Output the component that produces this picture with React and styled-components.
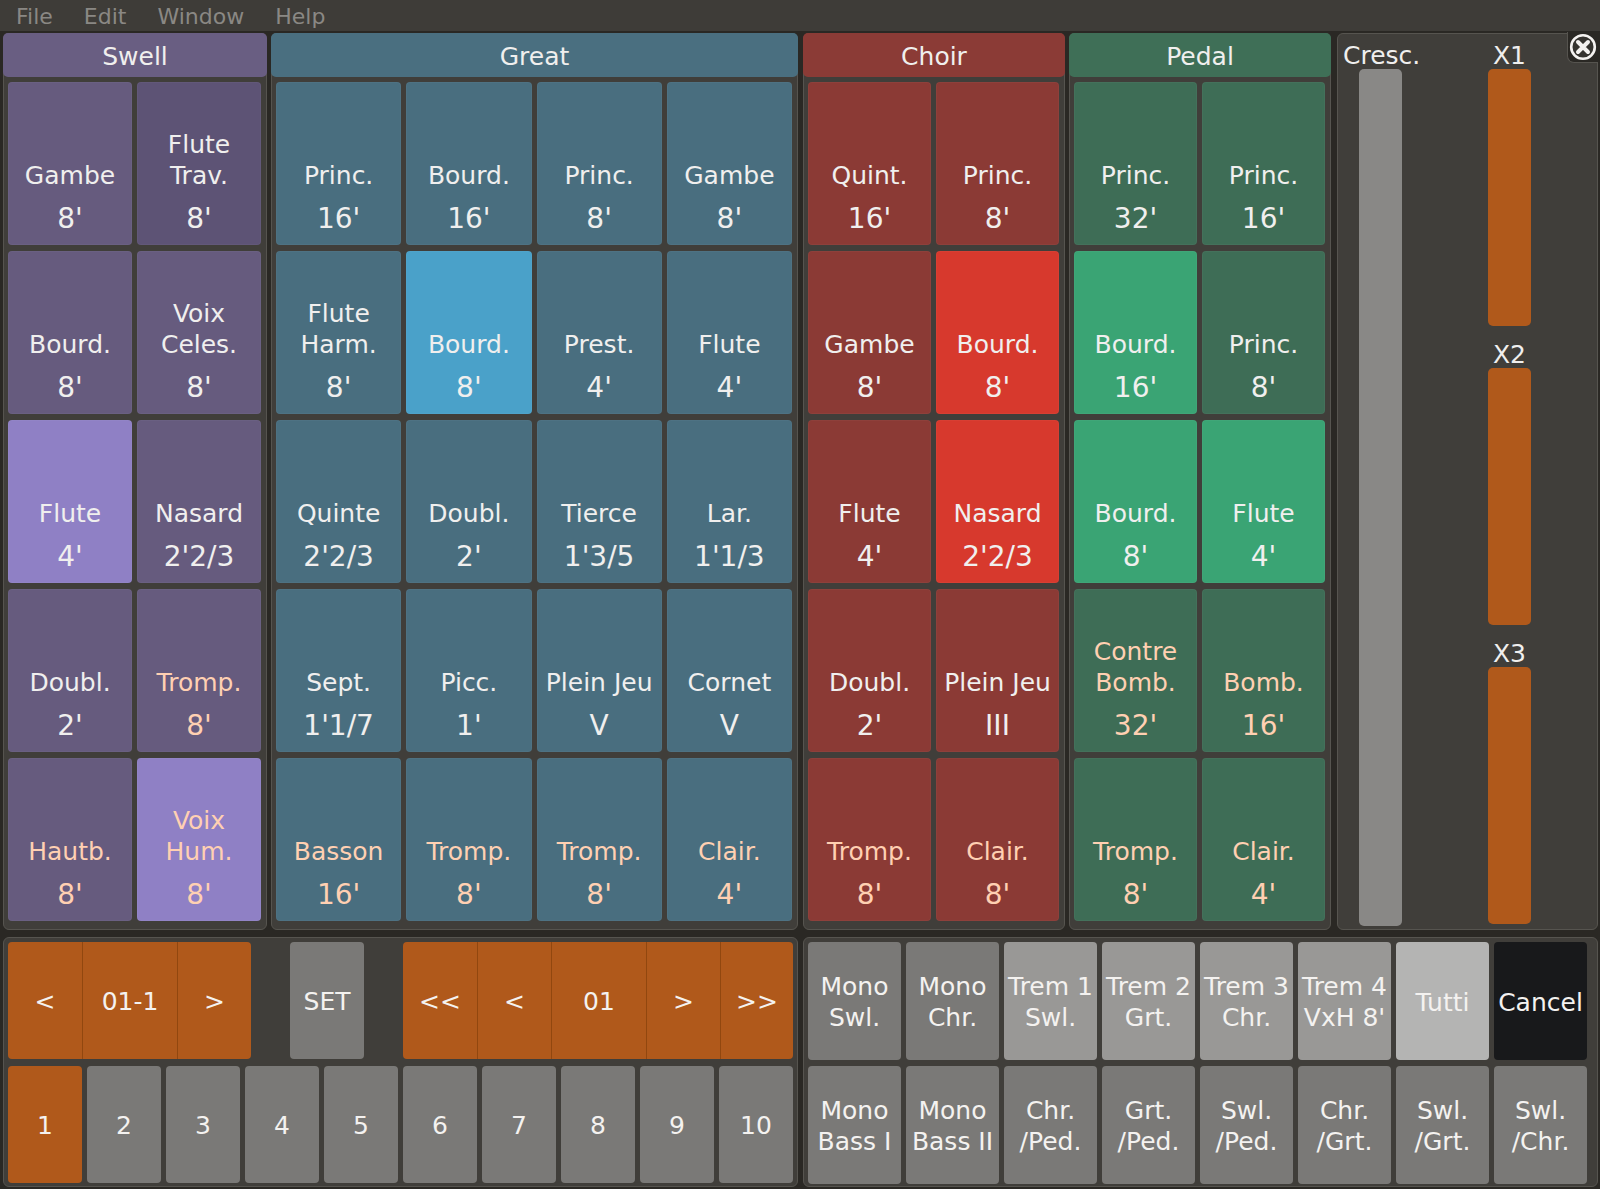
import React from "react";
import styled, { createGlobalStyle } from "styled-components";

const Global = createGlobalStyle`
  html, body { margin: 0; padding: 0; background: #2a2824; }
  body { font-family: "DejaVu Sans", "Liberation Sans", sans-serif; }
  * { box-sizing: border-box; }
`;

const Page = styled.div`
  width: 1600px;
  height: 1189px;
  background: #2a2824;
  display: flex;
  flex-direction: column;
  color: #f0efee;
  overflow: hidden;
`;

const MenuBar = styled.div`
  height: 31px;
  background: #3e3c38;
  display: flex;
  align-items: center;
  gap: 31px;
  padding-left: 16px;
  padding-top: 3px;
  font-size: 22px;
  color: #8a8884;
  flex: 0 0 auto;
`;

const MenuItem = styled.span`
  line-height: 28px;
`;

const TopRow = styled.div`
  margin-top: 2px;
  height: 897px;
  display: flex;
  padding-left: 3px;
  flex: 0 0 auto;
`;

const Panel = styled.div`
  width: ${(p) => p.$w}px;
  margin-right: ${(p) => p.$mr || 0}px;
  background: #403e3a;
  border: 1px solid #56544f;
  border-radius: 6px;
  display: flex;
  flex-direction: column;
  position: relative;
  flex: 0 0 auto;
`;

const Header = styled.div`
  height: 44px;
  margin: -1px -1px 0;
  padding-top: 2px;
  background: ${(p) => p.$bg};
  border-radius: 5px;
  display: flex;
  align-items: center;
  justify-content: center;
  font-size: 25px;
  color: #f0efee;
  flex: 0 0 auto;
`;

const StopGrid = styled.div`
  flex: 1;
  display: grid;
  grid-template-columns: repeat(${(p) => p.$cols}, 1fr);
  grid-template-rows: repeat(5, 1fr);
  column-gap: 5px;
  row-gap: 6px;
  padding: 5px 5px 8px 4px;
`;

const Stop = styled.div`
  background: ${(p) => p.$bg};
  border-radius: 4px;
  border: 1px solid rgba(255, 255, 255, 0.03);
  display: flex;
  flex-direction: column;
  justify-content: flex-end;
  align-items: center;
  text-align: center;
  padding-bottom: 8px;
  color: ${(p) => (p.$reed ? "#ffd0b2" : "#f0efee")};
  white-space: nowrap;
  overflow: hidden;
`;

const StopName = styled.div`
  font-size: 25px;
  line-height: 31px;
`;

const StopPitch = styled.div`
  font-size: 28px;
  line-height: 34px;
  margin-top: 11px;
`;

const CrescPanel = styled(Panel)`
  flex-direction: row;
  padding: 5px 0 3px 5px;
`;

const CrescCol = styled.div`
  display: flex;
  flex-direction: column;
  width: 64px;
`;

const Label = styled.div`
  font-size: 25px;
  line-height: 34px;
  height: 30px;
  color: #f0efee;
  margin-top: ${(p) => p.$mt || 0}px;
  text-align: ${(p) => p.$align || "left"};
  white-space: nowrap;
`;

const Bar = styled.div`
  flex: 1;
  width: 43px;
  margin-left: ${(p) => p.$ml || 0}px;
  background: ${(p) => p.$bg};
  border-radius: 5px;
`;

const XCol = styled.div`
  display: flex;
  flex-direction: column;
  width: 43px;
  margin-left: 81px;
  padding-bottom: 2px;
`;

const Notch = styled.div`
  position: absolute;
  top: -2px;
  right: -1px;
  width: 31px;
  height: 31px;
  background: #2a2824;
  border-left: 1px solid #56544f;
  border-bottom: 1px solid #56544f;
  border-bottom-left-radius: 7px;
  display: flex;
  align-items: center;
  justify-content: center;
`;

const BottomRow = styled.div`
  margin-top: 7px;
  height: 250px;
  display: flex;
  padding-left: 3px;
  gap: 5px;
  flex: 0 0 auto;
`;

const BottomPanel = styled.div`
  width: 795px;
  background: #403e3a;
  border: 1px solid #56544f;
  border-radius: 6px;
  padding: 4px 4px 3px 4px;
  display: flex;
  flex-direction: column;
  gap: 7px;
`;

const ComboRow = styled.div`
  height: 117px;
  display: flex;
  align-items: stretch;
`;

const Segment = styled.div`
  flex: 0 0 ${(p) => p.$w}px;
  display: flex;
  background: #b0591b;
  border-radius: 4px;
  overflow: hidden;
`;

const SegCell = styled.div`
  flex: 0 0 ${(p) => p.$w}px;
  display: flex;
  align-items: center;
  justify-content: center;
  padding-top: 2px;
  font-size: 25px;
  color: #f4f2f0;
  & + & {
    border-left: 1px solid #91470f;
  }
`;

const Spacer = styled.div`
  flex: 1;
`;

const Btn = styled.div`
  background: ${(p) => p.$bg || "#7a7977"};
  border-radius: 4px;
  display: flex;
  align-items: center;
  justify-content: center;
  text-align: center;
  padding-top: 2px;
  font-size: 25px;
  line-height: 31px;
  color: #f4f2f0;
  white-space: nowrap;
  flex: ${(p) => (p.$w ? `0 0 ${p.$w}px` : "initial")};
`;

const NumberRow = styled.div`
  height: 117px;
  display: grid;
  grid-template-columns: repeat(10, 74px);
  column-gap: 5px;
`;

const CouplerGrid = styled.div`
  display: grid;
  grid-template-columns: repeat(8, 93px);
  grid-template-rows: 118px 118px;
  column-gap: 5px;
  row-gap: 6px;
`;

const manuals = [
  {
    name: "Swell",
    w: 264,
    mr: 4,
    cols: 2,
    header: "#695e82",
    base: "#665b7e",
    dark: "#5d5375",
    active: "#8f80c5",
    stops: [
      [["Gambe"], "8'"],
      [["Flute", "Trav."], "8'", "dark"],
      [["Bourd."], "8'"],
      [["Voix", "Celes."], "8'"],
      [["Flute"], "4'", "on"],
      [["Nasard"], "2'2/3"],
      [["Doubl."], "2'"],
      [["Tromp."], "8'", "reed"],
      [["Hautb."], "8'", "reed"],
      [["Voix", "Hum."], "8'", "reed on"],
    ],
  },
  {
    name: "Great",
    w: 527,
    mr: 5,
    cols: 4,
    header: "#4a6f80",
    base: "#496e7f",
    active: "#4aa1c9",
    stops: [
      [["Princ."], "16'"],
      [["Bourd."], "16'"],
      [["Princ."], "8'"],
      [["Gambe"], "8'"],
      [["Flute", "Harm."], "8'"],
      [["Bourd."], "8'", "on"],
      [["Prest."], "4'"],
      [["Flute"], "4'"],
      [["Quinte"], "2'2/3"],
      [["Doubl."], "2'"],
      [["Tierce"], "1'3/5"],
      [["Lar."], "1'1/3"],
      [["Sept."], "1'1/7"],
      [["Picc."], "1'"],
      [["Plein Jeu"], "V"],
      [["Cornet"], "V"],
      [["Basson"], "16'", "reed"],
      [["Tromp."], "8'", "reed"],
      [["Tromp."], "8'", "reed"],
      [["Clair."], "4'", "reed"],
    ],
  },
  {
    name: "Choir",
    w: 262,
    mr: 4,
    cols: 2,
    header: "#8b3b36",
    base: "#8b3a35",
    active: "#d7392d",
    stops: [
      [["Quint."], "16'"],
      [["Princ."], "8'"],
      [["Gambe"], "8'"],
      [["Bourd."], "8'", "on"],
      [["Flute"], "4'"],
      [["Nasard"], "2'2/3", "on"],
      [["Doubl."], "2'"],
      [["Plein Jeu"], "III"],
      [["Tromp."], "8'", "reed"],
      [["Clair."], "8'", "reed"],
    ],
  },
  {
    name: "Pedal",
    w: 262,
    mr: 6,
    cols: 2,
    header: "#3f6f57",
    base: "#3e6d56",
    active: "#3aa474",
    stops: [
      [["Princ."], "32'"],
      [["Princ."], "16'"],
      [["Bourd."], "16'", "on"],
      [["Princ."], "8'"],
      [["Bourd."], "8'", "on"],
      [["Flute"], "4'", "on"],
      [["Contre", "Bomb."], "32'", "reed"],
      [["Bomb."], "16'", "reed"],
      [["Tromp."], "8'", "reed"],
      [["Clair."], "4'", "reed"],
    ],
  },
];

const couplers = [
  [["Mono", "Swl."], "#7a7977"],
  [["Mono", "Chr."], "#7a7977"],
  [["Trem 1", "Swl."], "#999896"],
  [["Trem 2", "Grt."], "#999896"],
  [["Trem 3", "Chr."], "#999896"],
  [["Trem 4", "VxH 8'"], "#999896"],
  [["Tutti"], "#b4b4b3"],
  [["Cancel"], "#18191b"],
  [["Mono", "Bass I"], "#7a7977"],
  [["Mono", "Bass II"], "#7a7977"],
  [["Chr.", "/Ped."], "#7a7977"],
  [["Grt.", "/Ped."], "#7a7977"],
  [["Swl.", "/Ped."], "#7a7977"],
  [["Chr.", "/Grt."], "#7a7977"],
  [["Swl.", "/Grt."], "#7a7977"],
  [["Swl.", "/Chr."], "#7a7977"],
];

function CloseIcon() {
  return (
    <svg width="28" height="28" viewBox="0 0 28 28">
      <circle cx="14" cy="14" r="11.8" fill="#35332f" stroke="#f4f2f0" strokeWidth="2.6" />
      <path d="M9 9 L19 19 M19 9 L9 19" stroke="#f4f2f0" strokeWidth="4" strokeLinecap="round" />
    </svg>
  );
}

function Manual({ m }) {
  return (
    <Panel $w={m.w} $mr={m.mr}>
      <Header $bg={m.header}>{m.name}</Header>
      <StopGrid $cols={m.cols}>
        {m.stops.map(([lines, pitch, flags = ""], i) => {
          const bg = flags.includes("on")
            ? m.active
            : flags.includes("dark")
            ? m.dark
            : m.base;
          return (
            <Stop key={i} $bg={bg} $reed={flags.includes("reed")}>
              {lines.map((l, j) => (
                <StopName key={j}>{l}</StopName>
              ))}
              <StopPitch>{pitch}</StopPitch>
            </Stop>
          );
        })}
      </StopGrid>
    </Panel>
  );
}

export default function App() {
  return (
    <Page>
      <Global />
      <MenuBar>
        <MenuItem>File</MenuItem>
        <MenuItem>Edit</MenuItem>
        <MenuItem>Window</MenuItem>
        <MenuItem>Help</MenuItem>
      </MenuBar>
      <TopRow>
        {manuals.map((m) => (
          <Manual key={m.name} m={m} />
        ))}
        <CrescPanel $w={261}>
          <CrescCol>
            <Label>Cresc.</Label>
            <Bar $bg="#898886" $ml={16} />
          </CrescCol>
          <XCol>
            <Label $align="center">X1</Label>
            <Bar $bg="#b0591b" />
            <Label $align="center" $mt={12}>X2</Label>
            <Bar $bg="#b0591b" />
            <Label $align="center" $mt={12}>X3</Label>
            <Bar $bg="#b0591b" />
          </XCol>
          <Notch>
            <CloseIcon />
          </Notch>
        </CrescPanel>
      </TopRow>
      <BottomRow>
        <BottomPanel>
          <ComboRow>
            <Segment $w={243}>
              <SegCell $w={74}>&lt;</SegCell>
              <SegCell $w={95}>01-1</SegCell>
              <SegCell $w={74}>&gt;</SegCell>
            </Segment>
            <Spacer />
            <Btn $w={74}>SET</Btn>
            <Spacer />
            <Segment $w={390}>
              <SegCell $w={74}>&lt;&lt;</SegCell>
              <SegCell $w={74}>&lt;</SegCell>
              <SegCell $w={95}>01</SegCell>
              <SegCell $w={74}>&gt;</SegCell>
              <SegCell $w={73}>&gt;&gt;</SegCell>
            </Segment>
          </ComboRow>
          <NumberRow>
            {Array.from({ length: 10 }, (_, i) => (
              <Btn key={i} $bg={i === 0 ? "#b0591b" : "#7a7977"}>
                {i + 1}
              </Btn>
            ))}
          </NumberRow>
        </BottomPanel>
        <BottomPanel>
          <CouplerGrid>
            {couplers.map(([lines, bg], i) => (
              <Btn key={i} $bg={bg}>
                <div>
                  {lines.map((l, j) => (
                    <div key={j}>{l}</div>
                  ))}
                </div>
              </Btn>
            ))}
          </CouplerGrid>
        </BottomPanel>
      </BottomRow>
    </Page>
  );
}
